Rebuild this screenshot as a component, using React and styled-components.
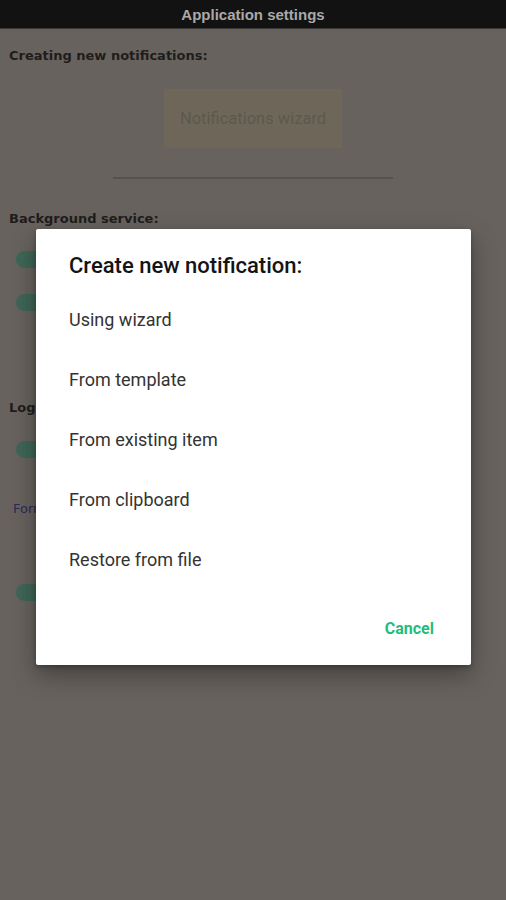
import React from "react";
import styled, { createGlobalStyle } from "styled-components";

const Global = createGlobalStyle`
  html, body { margin: 0; padding: 0; }
  body { font-family: "Liberation Sans", Arial, sans-serif; background: #67625e; }
`;

const Screen = styled.div`
  position: relative;
  width: 506px;
  min-height: 900px;
  background: #67625e;
  overflow: hidden;
`;

const Header = styled.header`
  height: 29px;
  background: #121212;
  display: flex;
  align-items: center;
  justify-content: center;
  color: #a9a9a9;
  font-weight: bold;
  font-size: 15px;
  border-bottom: 1px solid #3a3836;
  box-sizing: border-box;
`;

const Content = styled.main`
  display: flex;
  flex-direction: column;
  padding: 0 9px;
`;

const SectionTitle = styled.div`
  margin-top: ${(p) => p.$mt}px;
  font-family: "DejaVu Sans", "Liberation Sans", sans-serif;
  font-weight: bold;
  font-size: 13px;
  line-height: 16px;
  color: #1f1d1c;
`;

const WizardButton = styled.div`
  align-self: center;
  margin-top: 25px;
  width: 178px;
  height: 59px;
  background: #6e6759;
  color: #5c584f;
  font-family: Roboto, "Liberation Sans", sans-serif;
  font-size: 16.5px;
  display: flex;
  align-items: center;
  justify-content: center;
`;

const Divider = styled.div`
  align-self: center;
  margin-top: 29px;
  width: 280px;
  height: 2px;
  background: #57524e;
`;

const Toggle = styled.div`
  margin-top: ${(p) => p.$mt}px;
  margin-left: 7px;
  width: 36px;
  height: 17px;
  border-radius: 9px;
  background: #3e6656;
`;

const LinkText = styled.div`
  margin-top: ${(p) => p.$mt}px;
  margin-left: 4px;
  font-family: "DejaVu Sans", "Liberation Sans", sans-serif;
  font-size: 13px;
  line-height: 16px;
  color: #2b2a55;
`;

const Dialog = styled.div`
  position: absolute;
  top: 229px;
  left: 36px;
  width: 435px;
  height: 436px;
  box-sizing: border-box;
  background: #ffffff;
  border-radius: 2px;
  box-shadow: 0 10px 24px rgba(0, 0, 0, 0.35), 0 2px 4px rgba(0, 0, 0, 0.25);
  padding: 24px 37px 19px 33px;
  display: flex;
  flex-direction: column;
  font-family: Roboto, "Liberation Sans", sans-serif;
`;

const DialogTitle = styled.div`
  font-size: 22px;
  font-weight: 500;
  line-height: 26px;
  color: #141414;
  margin-bottom: 10px;
`;

const Option = styled.div`
  height: 60px;
  display: flex;
  align-items: center;
  font-size: 18px;
  color: #333333;
`;

const Actions = styled.div`
  margin-top: auto;
  display: flex;
  justify-content: flex-end;
`;

const TextButton = styled.div`
  height: 36px;
  display: flex;
  align-items: center;
  font-size: 16px;
  font-weight: bold;
  color: #1fbd80;
`;

const options = [
  "Using wizard",
  "From template",
  "From existing item",
  "From clipboard",
  "Restore from file",
];

export default function App() {
  return (
    <Screen>
      <Global />
      <Header>Application settings</Header>
      <Content>
        <SectionTitle $mt={19}>Creating new notifications:</SectionTitle>
        <WizardButton>Notifications wizard</WizardButton>
        <Divider />
        <SectionTitle $mt={32}>Background service:</SectionTitle>
        <Toggle $mt={24} />
        <Toggle $mt={26} />
        <SectionTitle $mt={89}>Logging:</SectionTitle>
        <Toggle $mt={25} />
        <LinkText $mt={43}>Format</LinkText>
        <Toggle $mt={67} />
      </Content>
      <Dialog>
        <DialogTitle>Create new notification:</DialogTitle>
        {options.map((o) => (
          <Option key={o}>{o}</Option>
        ))}
        <Actions>
          <TextButton>Cancel</TextButton>
        </Actions>
      </Dialog>
    </Screen>
  );
}
